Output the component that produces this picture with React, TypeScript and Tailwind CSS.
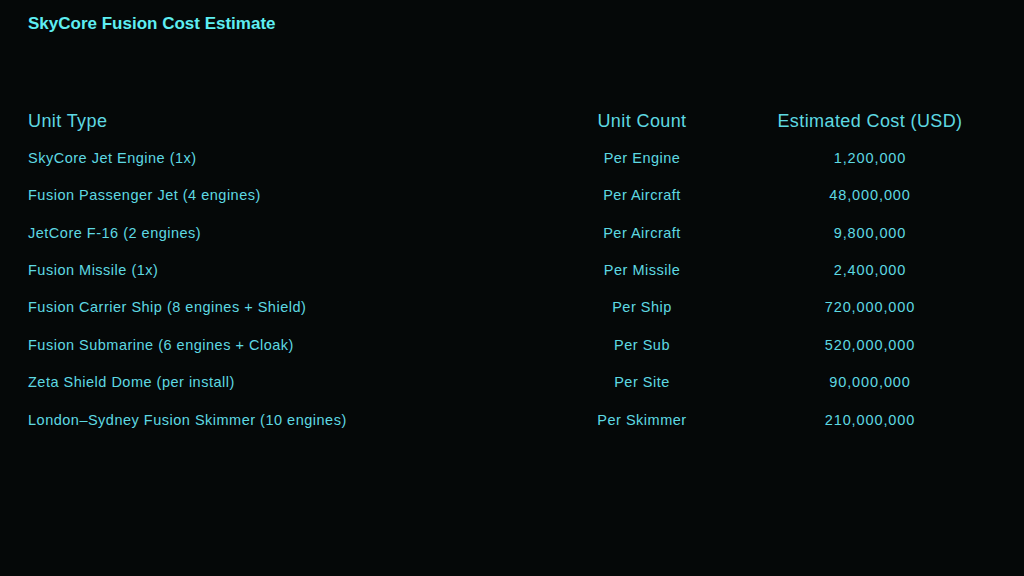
import React from "react";

const rows: [string, string, string][] = [
  ["SkyCore Jet Engine (1x)", "Per Engine", "1,200,000"],
  ["Fusion Passenger Jet (4 engines)", "Per Aircraft", "48,000,000"],
  ["JetCore F-16 (2 engines)", "Per Aircraft", "9,800,000"],
  ["Fusion Missile (1x)", "Per Missile", "2,400,000"],
  ["Fusion Carrier Ship (8 engines + Shield)", "Per Ship", "720,000,000"],
  ["Fusion Submarine (6 engines + Cloak)", "Per Sub", "520,000,000"],
  ["Zeta Shield Dome (per install)", "Per Site", "90,000,000"],
  ["London\u2013Sydney Fusion Skimmer (10 engines)", "Per Skimmer", "210,000,000"],
];

export default function App() {
  return (
    <div
      className="w-[1024px] h-[576px] bg-[#050808] text-[#5ed9e2] overflow-hidden"
      style={{ fontFamily: '"Liberation Sans", Arial, sans-serif' }}
    >
      <h1 className="pl-[28px] pt-[13px] text-[17px] leading-[22px] font-bold text-[#5eeef2]">
        SkyCore Fusion Cost Estimate
      </h1>
      <div className="pl-[28px] pt-[73px]">
        <div className="grid grid-cols-[534px_160px_296px] h-[24px] items-center text-[18px] tracking-[0.4px]">
          <div>Unit Type</div>
          <div className="text-center">Unit Count</div>
          <div className="text-center">Estimated Cost (USD)</div>
        </div>
        <div className="pt-[8px]">
          {rows.map((r) => (
            <div
              key={r[0]}
              className="grid grid-cols-[534px_160px_296px] h-[37.4px] items-center text-[14.5px] tracking-[0.5px]"
            >
              <div>{r[0]}</div>
              <div className="text-center">{r[1]}</div>
              <div className="text-center tracking-[0.9px]">{r[2]}</div>
            </div>
          ))}
        </div>
      </div>
    </div>
  );
}
